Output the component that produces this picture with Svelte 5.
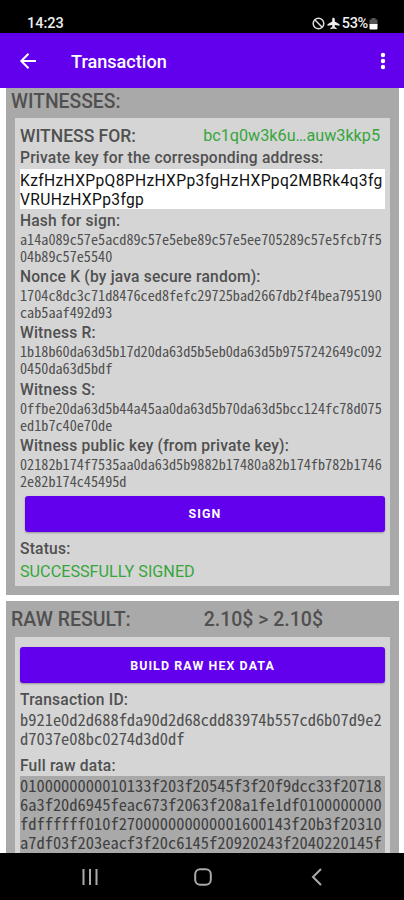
<script lang="ts">
  const address = "bc1q0w3k6u…auw3kkp5";
  const privateKey = "KzfHzHXPpQ8PHzHXPp3fgHzHXPpq2MBRk4q3fgVRUHzHXPp3fgp";

  const fields = [
    {
      label: "Hash for sign:",
      value: "a14a089c57e5acd89c57e5ebe89c57e5ee705289c57e5fcb7f504b89c57e5540",
    },
    {
      label: "Nonce K (by java secure random):",
      value: "1704c8dc3c71d8476ced8fefc29725bad2667db2f4bea795190cab5aaf492d93",
    },
    {
      label: "Witness R:",
      value: "1b18b60da63d5b17d20da63d5b5eb0da63d5b9757242649c0920450da63d5bdf",
    },
    {
      label: "Witness S:",
      value: "0ffbe20da63d5b44a45aa0da63d5b70da63d5bcc124fc78d075ed1b7c40e70de",
    },
    {
      label: "Witness public key (from private key):",
      value: "02182b174f7535aa0da63d5b9882b17480a82b174fb782b17462e82b174c45495d",
    },
  ];

  const transactionId = "b921e0d2d688fda90d2d68cdd83974b557cd6b07d9e2d7037e08bc0274d3d0df";
  const rawData =
    "0100000000010133f203f20545f3f20f9dcc33f20718" +
    "6a3f20d6945feac673f2063f208a1fe1df0100000000" +
    "fdffffff010f270000000000001600143f20b3f20310" +
    "a7df03f203eacf3f20c6145f20920243f2040220145f";
</script>

<div class="screen">
  <div class="status-bar">
    <span class="clock">14:23</span>
    <div class="status-icons">
      <svg class="blocked" width="13" height="13" viewBox="0 0 13 13">
        <circle cx="6.5" cy="6.5" r="5.3" />
        <path d="M2.8 2.8l7.4 7.4" />
      </svg>
      <svg class="plane" width="13" height="13" viewBox="0 0 13 13">
        <path d="M6.5.8c.9 0 1.3.7 1.3 1.5v2.3l4.7 2.6v1.5L7.8 7.9v2l1.8 1.2v1.1l-3.1-.6-3.1.6v-1.1l1.8-1.2v-2L.5 8.7V7.2l4.7-2.6V2.3C5.2 1.5 5.6.8 6.5.8z" />
      </svg>
      <span class="percent">53%</span>
      <svg class="battery" width="9" height="13" viewBox="0 0 9 13">
        <path class="empty" d="M2.5 1h4v1.5h2V8H.5V2.5h2z" />
        <path class="full" d="M.5 7h8v4.5q0 1-1 1h-6q-1 0-1-1z" />
      </svg>
    </div>
  </div>

  <header class="app-bar">
    <button class="icon-button back" type="button" aria-label="Back">
      <svg width="18" height="18" viewBox="0 0 18 18">
        <path d="M17 9H2.5M9.5 1.8L2.3 9l7.2 7.2" />
      </svg>
    </button>
    <h1>Transaction</h1>
    <button class="icon-button more" type="button" aria-label="More">
      <svg width="6" height="18" viewBox="0 0 6 18">
        <circle cx="3" cy="3" r="2.2" />
        <circle cx="3" cy="9" r="2.2" />
        <circle cx="3" cy="15" r="2.2" />
      </svg>
    </button>
  </header>

  <main>
    <section class="block witnesses">
      <h2>WITNESSES:</h2>
      <div class="panel">
        <div class="witness-head">
          <span class="witness-for">WITNESS FOR:</span>
          <span class="address">{address}</span>
        </div>
        <div class="label key-label">Private key for the corresponding address:</div>
        <div class="key-input">{privateKey}</div>
        {#each fields as field}
          <div class="field">
            <div class="label">{field.label}</div>
            <div class="hex small">{field.value}</div>
          </div>
        {/each}
        <button class="action sign" type="button">SIGN</button>
        <div class="label">Status:</div>
        <div class="status">SUCCESSFULLY SIGNED</div>
      </div>
    </section>

    <section class="block result">
      <h2>
        <span>RAW RESULT:</span>
        <span class="amount">2.10$ &gt; 2.10$</span>
      </h2>
      <div class="panel">
        <button class="action" type="button">BUILD RAW HEX DATA</button>
        <div class="label result-label">Transaction ID:</div>
        <div class="hex">{transactionId}</div>
        <div class="label result-label">Full raw data:</div>
        <div class="hex raw">{rawData}</div>
      </div>
    </section>
  </main>

  <nav class="nav-bar">
    <svg width="18" height="18" viewBox="0 0 18 18">
      <path d="M2.5 1v16M9 1v16M15.5 1v16" />
    </svg>
    <svg width="18" height="18" viewBox="0 0 18 18">
      <rect x="1.2" y="1.2" width="15.6" height="15.6" rx="5" />
    </svg>
    <svg width="18" height="18" viewBox="0 0 18 18">
      <path d="M13 1L5 9l8 8" />
    </svg>
  </nav>
</div>

<style>
  :global(body) {
    margin: 0;
    background: #fff;
  }

  .screen {
    display: flex;
    flex-direction: column;
    width: 404px;
    height: 900px;
    overflow: hidden;
    background: #fff;
    color: #505050;
    font-family: Roboto, sans-serif;
    white-space: nowrap;
  }

  .status-bar {
    box-sizing: border-box;
    flex: none;
    display: flex;
    justify-content: space-between;
    height: 33px;
    padding: 14px 26px 0 27px;
    background: #000;
    color: #eee;
    font-size: 14.5px;
    font-weight: 500;
    line-height: 19px;
  }

  .status-icons {
    display: flex;
    align-items: center;
    height: 18px;
  }

  .blocked {
    fill: none;
    stroke: #ddd;
    stroke-width: 1.5;
  }

  .plane {
    margin-left: 2px;
    fill: #eee;
  }

  .percent {
    margin-left: 2px;
    letter-spacing: -0.3px;
  }

  .battery {
    margin-left: 1px;
  }

  .battery .empty {
    fill: #555;
  }

  .battery .full {
    fill: #fff;
  }

  .app-bar {
    flex: none;
    display: flex;
    align-items: center;
    height: 55px;
    background: #6200ee;
    color: #fff;
  }

  .icon-button {
    display: flex;
    padding: 0;
    border: 0;
    background: none;
  }

  .back {
    margin-left: 19px;
  }

  .back path {
    fill: none;
    stroke: #fff;
    stroke-width: 2;
  }

  .more {
    margin: 0 18px 0 auto;
    fill: #fff;
  }

  h1 {
    margin: 2px 0 0 34px;
    font-size: 18.1px;
    font-weight: 500;
    line-height: 24px;
  }

  main {
    flex: 1;
    min-height: 0;
    overflow: hidden;
    padding: 0 5px 0 6px;
  }

  .block {
    background: #a9a9a9;
    padding: 0 9px 9px;
  }

  h2 {
    display: flex;
    margin: 0 -4px;
    height: 30px;
    font-size: 19.3px;
    font-weight: 500;
    line-height: 27px;
  }

  .result {
    margin-top: 6px;
  }

  .result h2 {
    height: 36px;
    font-size: 19.5px;
    line-height: 38px;
  }

  .amount {
    margin-left: auto;
    margin-right: 71px;
  }

  .panel {
    box-sizing: border-box;
    padding: 0 5px;
    background: #d5d5d5;
  }

  .witnesses .panel {
    height: 468px;
  }

  .witness-head {
    display: flex;
    justify-content: space-between;
    height: 21px;
    padding: 7px 5px 0 0;
    font-size: 17.5px;
    line-height: 22px;
  }

  .witness-for {
    font-weight: 500;
  }

  .address {
    font-size: 16.2px;
  }

  .address,
  .status {
    color: #36a63c;
  }

  .label {
    height: 20px;
    font-size: 15.6px;
    font-weight: 500;
    letter-spacing: 0.2px;
    line-height: 21px;
  }

  .key-label {
    height: 21px;
    padding-top: 2px;
  }

  .key-input {
    height: 37px;
    margin-bottom: 2px;
    padding-top: 3px;
    background: #fff;
    color: #111;
    font-size: 15.6px;
    letter-spacing: 0.35px;
    line-height: 19px;
    white-space: normal;
    word-break: break-all;
  }

  .hex {
    font-family: "Noto Sans Mono CJK SC", "Noto Sans CJK SC", monospace;
    font-size: 16.45px;
    line-height: 19.3px;
    white-space: normal;
    word-break: break-all;
  }

  .small {
    height: 36px;
    font-size: 14.2px;
    line-height: 17px;
  }

  .field {
    height: 56.2px;
  }

  .action {
    display: block;
    width: 365px;
    height: 36px;
    padding: 0;
    border: 0;
    border-radius: 3px;
    background: #6200ee;
    box-shadow: 0 1px 2px rgba(0, 0, 0, 0.3);
    color: #fff;
    font-family: inherit;
    font-size: 12.4px;
    font-weight: 700;
    letter-spacing: 1.1px;
  }

  .sign {
    width: 360px;
    margin: 4px 0 7px 5px;
  }

  .status {
    font-size: 16.2px;
    line-height: 25px;
  }

  .result .panel {
    padding-top: 10px;
  }

  .result-label {
    margin-top: 7px;
  }

  .raw {
    background: #a9a9a9;
    color: #404040;
  }

  .nav-bar {
    flex: none;
    display: flex;
    justify-content: center;
    align-items: center;
    gap: 95.5px;
    height: 47px;
    padding-left: 2px;
    background: #000;
    fill: none;
    stroke: #aaa;
    stroke-width: 2;
  }
</style>
